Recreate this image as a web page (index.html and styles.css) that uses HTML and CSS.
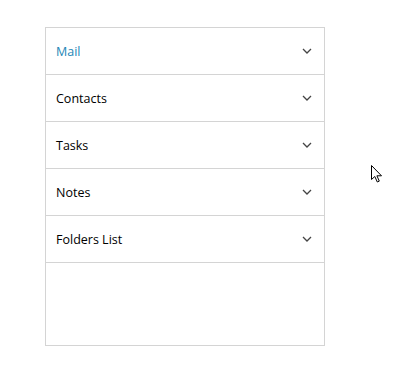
FILE: index.html
```html
<!DOCTYPE html>
<html>
<head>
<meta charset="utf-8">
<link rel="stylesheet" href="styles.css">
</head>
<body>
<div class="page">
  <div class="accordion">
    <div class="item active"><span class="label">Mail</span><svg class="chev" width="10" height="6" viewBox="0 0 10 6"><path d="M1 1 L5 5 L9 1" fill="none" stroke="#444" stroke-width="1.3"/></svg></div>
    <div class="item"><span class="label">Contacts</span><svg class="chev" width="10" height="6" viewBox="0 0 10 6"><path d="M1 1 L5 5 L9 1" fill="none" stroke="#444" stroke-width="1.3"/></svg></div>
    <div class="item"><span class="label">Tasks</span><svg class="chev" width="10" height="6" viewBox="0 0 10 6"><path d="M1 1 L5 5 L9 1" fill="none" stroke="#444" stroke-width="1.3"/></svg></div>
    <div class="item"><span class="label">Notes</span><svg class="chev" width="10" height="6" viewBox="0 0 10 6"><path d="M1 1 L5 5 L9 1" fill="none" stroke="#444" stroke-width="1.3"/></svg></div>
    <div class="item"><span class="label">Folders List</span><svg class="chev" width="10" height="6" viewBox="0 0 10 6"><path d="M1 1 L5 5 L9 1" fill="none" stroke="#444" stroke-width="1.3"/></svg></div>
    <div class="rest"></div>
  </div>
  <svg class="cursor" width="12" height="19" viewBox="0 0 12 19"><path d="M0.5 0.5 L0.5 14.5 L3.8 11.5 L6.3 17 L8.3 16.1 L5.9 10.8 L10.5 10.8 Z" fill="#fff" stroke="#000" stroke-width="1"/></svg>
</div>
</body>
</html>
```
FILE: styles.css
```css
html, body {
  margin: 0;
  padding: 0;
  background: #fff;
}
.page {
  position: relative;
  width: 396px;
  height: 391px;
  padding: 27px 0 0 45px;
  box-sizing: border-box;
  font-family: "Open Sans", "Noto Sans", sans-serif;
  font-size: 12.5px;
}
.accordion {
  width: 280px;
  height: 319px;
  box-sizing: border-box;
  border: 1px solid #d4d4d4;
  display: flex;
  flex-direction: column;
}
.item {
  height: 46px;
  border-bottom: 1px solid #d4d4d4;
  display: flex;
  align-items: center;
  justify-content: space-between;
  padding: 0 12px 0 10px;
  color: #000;
  flex-shrink: 0;
}
.item.active .label {
  color: #2386b6;
}
.chev {
  display: block;
}
.rest {
  flex: 1;
}
.cursor {
  position: absolute;
  left: 371px;
  top: 165px;
}
```
